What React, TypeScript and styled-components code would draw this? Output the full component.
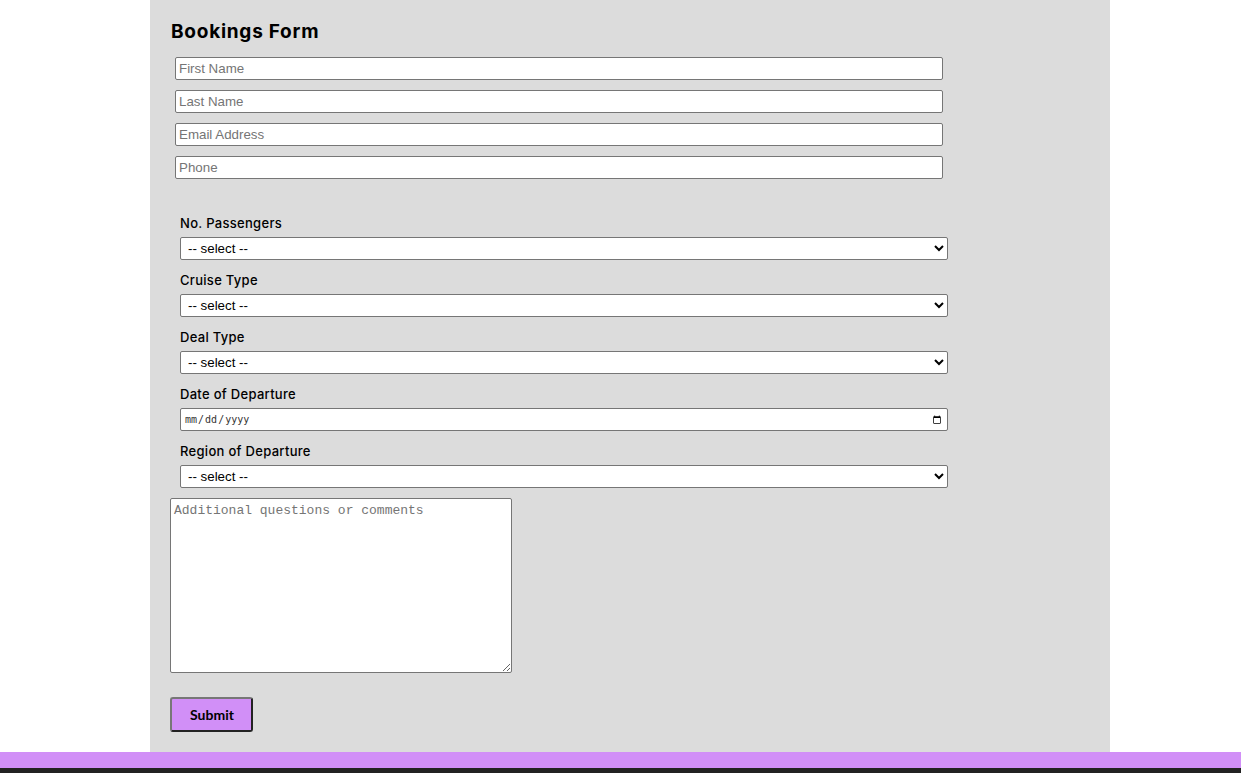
import styled, { createGlobalStyle } from 'styled-components';

const GlobalStyle = createGlobalStyle`
    html, body {
        margin: 0;
        padding: 0;
        background: #ffffff;
    }
    body {
        font-family: "Liberation Sans", Arial, sans-serif;
        overflow: hidden;
    }
`

const Page = styled.div`
    display: flex;
    flex-direction: column;
    min-height: 773px;
`

const Panel = styled.main`
    width: 940px;
    margin-left: 150px;
    padding: 0 0 20px 20px;
    background: #dcdcdc;
`

const Title = styled.h2`
    margin: 20px 0 13px 1px;
    font-family: Inter, "Noto Sans", sans-serif;
    font-size: 19px;
    line-height: 24px;
    font-weight: 700;
    letter-spacing: 0.75px;
    color: #000;
`

const Form = styled.form`
    display: flex;
    flex-direction: column;
    align-items: flex-start;
`

const TextField = styled.input`
    box-sizing: border-box;
    width: 768px;
    height: 23px;
    margin: 0 0 10px 5px;
    padding: 1px 3px;
    border: 1px solid #767676;
    border-radius: 2px;
    background: #fff;
    font-family: "Liberation Sans", Arial, sans-serif;
    font-size: 13.33px;
    color: #000;
    &::placeholder {
        color: #757575;
    }
`

const Fieldset = styled.div`
    display: flex;
    flex-direction: column;
    margin: 26px 0 0 10px;
`

const Label = styled.label`
    display: block;
    margin: 0 0 6px;
    font-family: Inter, "Noto Sans", sans-serif;
    font-size: 13px;
    line-height: 16px;
    font-weight: 500;
    letter-spacing: 0.3px;
    color: #000;
`

const Field = styled.div`
    display: flex;
    flex-direction: column;
    margin-bottom: 12px;
    &:last-child {
        margin-bottom: 10px;
    }
`

const Select = styled.select`
    box-sizing: border-box;
    width: 768px;
    height: 23px;
    padding: 0 3px;
    border: 1px solid #767676;
    border-radius: 2px;
    background: #fff;
    font-family: "Liberation Sans", Arial, sans-serif;
    font-size: 13.33px;
    color: #000;
`

const DateField = styled.input`
    box-sizing: border-box;
    width: 768px;
    height: 23px;
    padding: 0 3px;
    border: 1px solid #767676;
    border-radius: 2px;
    background: #fff;
    font-family: "DejaVu Sans Mono", monospace;
    font-size: 10px;
    color: #333;
    &::-webkit-datetime-edit-month-field,
    &::-webkit-datetime-edit-day-field,
    &::-webkit-datetime-edit-year-field,
    &::-webkit-datetime-edit-month-field:focus,
    &::-webkit-datetime-edit-day-field:focus,
    &::-webkit-datetime-edit-year-field:focus {
        background-color: transparent !important;
        color: #333 !important;
    }
`

const Comments = styled.textarea`
    box-sizing: border-box;
    width: 342px;
    height: 175px;
    margin: 0 0 24px;
    padding: 4px 3px 2px;
    border: 1px solid #767676;
    border-radius: 2px;
    background: #fff;
    font-family: "Liberation Mono", monospace;
    font-size: 13px;
    line-height: 16px;
    &::placeholder {
        color: #757575;
    }
`

const SubmitButton = styled.button`
    box-sizing: border-box;
    width: 83px;
    height: 35px;
    padding: 0 0 1px 1px;
    border: 2px solid;
    border-color: #777 #222 #222 #777;
    border-radius: 3px;
    background: #d18ff7;
    font-family: Lato, "Liberation Sans", sans-serif;
    font-size: 14px;
    font-weight: 700;
    color: #000;
    cursor: pointer;
`

const Stripe = styled.div`
    height: 16px;
    background: #d18ff7;
`

const Footer = styled.footer`
    flex: 1;
    background: #222222;
`

const selects = ['No. Passengers', 'Cruise Type', 'Deal Type'];

const App = () => {
    return <Page>
        <GlobalStyle />
        <Panel>
            <Title>Bookings Form</Title>
            <Form onSubmit={e => e.preventDefault()}>
                <TextField type="text" placeholder="First Name" />
                <TextField type="text" placeholder="Last Name" />
                <TextField type="email" placeholder="Email Address" />
                <TextField type="tel" placeholder="Phone" />

                <Fieldset>
                    {selects.map(label => (
                        <Field key={label}>
                            <Label>{label}</Label>
                            <Select defaultValue="">
                                <option value="">-- select --</option>
                            </Select>
                        </Field>
                    ))}
                    <Field>
                        <Label>Date of Departure</Label>
                        <DateField type="date" />
                    </Field>
                    <Field>
                        <Label>Region of Departure</Label>
                        <Select defaultValue="">
                            <option value="">-- select --</option>
                        </Select>
                    </Field>
                </Fieldset>

                <Comments placeholder="Additional questions or comments" />
                <SubmitButton type="submit">Submit</SubmitButton>
            </Form>
        </Panel>
        <Stripe />
        <Footer />
    </Page>
}

export default App;
